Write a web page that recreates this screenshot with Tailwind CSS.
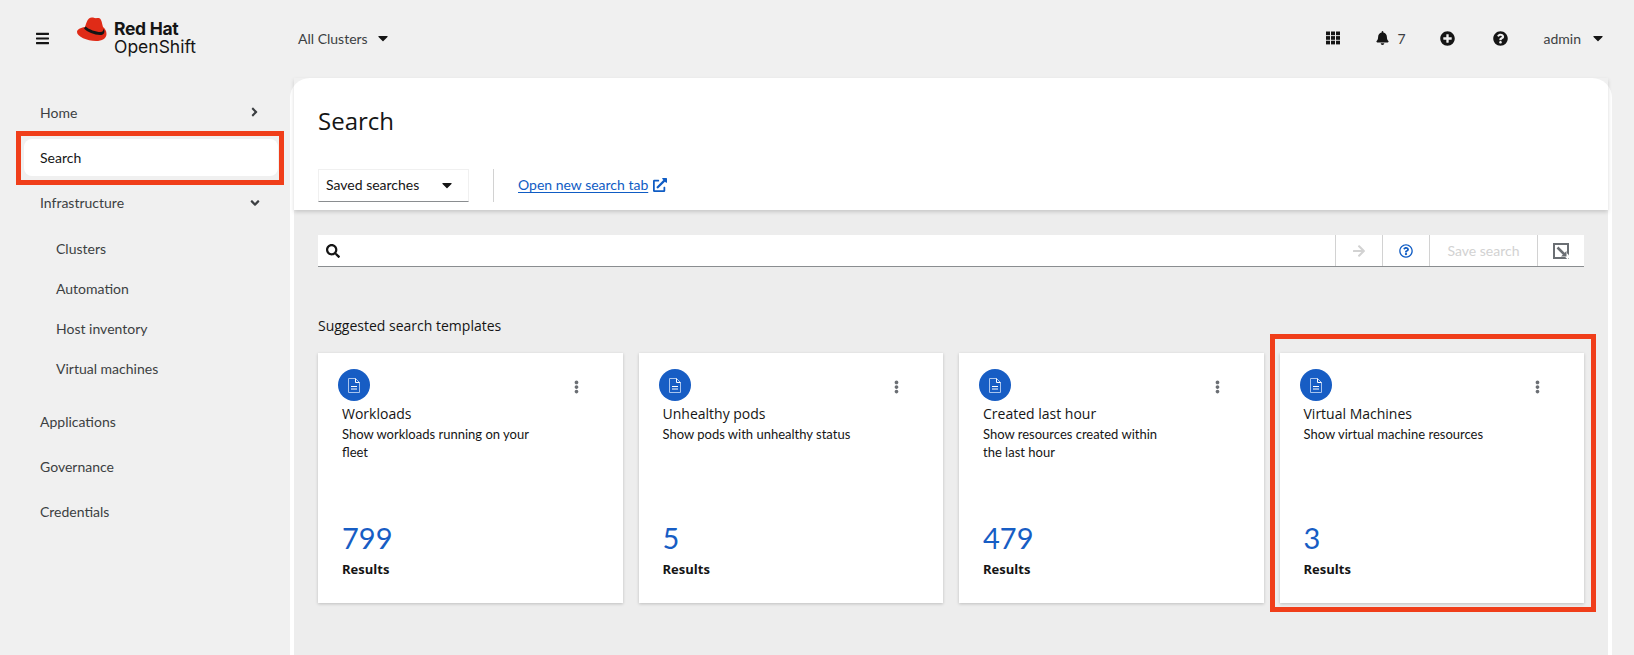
<!DOCTYPE html>
<html lang="en">
<head>
<meta charset="UTF-8" />
<title>Search - Red Hat OpenShift</title>
<script src="https://cdn.jsdelivr.net/npm/@tailwindcss/browser@4"></script>
</head>
<body class="bg-[#f0f0f0] text-[#151515] font-['Lato',sans-serif] h-[655px] overflow-hidden relative">

  <!-- Masthead -->
  <header class="h-[78px] pb-[2px] flex items-center">
    <button class="w-[12px] ml-[36px] mr-[29px]">
      <svg viewBox="0 0 448 512" class="w-[13px] h-[15px] fill-[#151515]"><path d="M16 132h416c8.837 0 16-7.163 16-16V76c0-8.837-7.163-16-16-16H16C7.163 60 0 67.163 0 76v40c0 8.837 7.163 16 16 16zm0 160h416c8.837 0 16-7.163 16-16v-40c0-8.837-7.163-16-16-16H16c-8.837 0-16 7.163-16 16v40c0 8.837 7.163 16 16 16zm0 160h416c8.837 0 16-7.163 16-16v-40c0-8.837-7.163-16-16-16H16c-8.837 0-16 7.163-16 16v40c0 8.837 7.163 16 16 16z"/></svg>
    </button>
    <div class="flex items-start w-[221px] h-[40px]">
      <svg viewBox="0 0 30 24" class="w-[30px] h-[24px] mt-[-1px]">
        <path fill="#e02b17" d="M8 10C9 7 10 3 12 1.500C13.500 .3 15.500 .5 17.500 1C19.500 1.500 21 .5 22.500 1.200C24.500 2.200 25 6 26 10C28 11.500 29.500 14 29.500 17C29.500 21.500 25 24 19 24C10 24 0 19.500 0 15C0 12.500 3.500 10.800 8 10Z"/>
        <path fill="#151515" d="M8.500 9.500C12 12.500 19 15 23.500 15C25.500 15 26.500 14 26.300 12L27.200 13C28 16 26.500 18 23 18C17.500 18 10 15 7 11.500Z"/>
      </svg>
      <div class="ml-[7px] mt-[2px]">
        <div class="text-[17.500px] leading-[17px] font-bold tracking-[-0.3px] font-['Inter',sans-serif]">Red Hat</div>
        <div class="text-[17.500px] leading-[19px] font-['Inter',sans-serif] font-normal">OpenShift</div>
      </div>
    </div>
    <button class="flex items-center text-[14px] text-[#3c3f42]">
      All Clusters
      <svg viewBox="0 0 320 512" class="w-[10px] h-[16px] ml-[10px] fill-[#151515]"><path d="M31.300 192h257.300c17.800 0 26.700 21.500 14.100 34.100L174.100 354.800c-7.800 7.800-20.500 7.800-28.300 0L17.200 226.100C4.600 213.500 13.500 192 31.300 192z"/></svg>
    </button>
    <div class="ml-auto flex items-center">
      <svg viewBox="0 0 14 14" class="w-[14px] h-[14px] fill-[#151515] mr-[36px]">
        <rect x="0" y="0.500" width="4" height="3.700"/><rect x="5" y="0.500" width="4" height="3.700"/><rect x="10" y="0.500" width="4" height="3.700"/>
        <rect x="0" y="5.100" width="4" height="3.700"/><rect x="5" y="5.100" width="4" height="3.700"/><rect x="10" y="5.100" width="4" height="3.700"/>
        <rect x="0" y="9.700" width="4" height="3.700"/><rect x="5" y="9.700" width="4" height="3.700"/><rect x="10" y="9.700" width="4" height="3.700"/>
      </svg>
      <svg viewBox="0 0 448 512" class="w-[13px] h-[14px] fill-[#151515]"><path d="M224 512c35.320 0 63.970-28.650 63.970-64H160.030c0 35.350 28.650 64 63.970 64zm215.390-149.710c-19.320-20.760-55.470-51.990-55.470-154.290 0-77.700-54.480-139.900-127.940-155.160V32c0-17.670-14.320-32-31.980-32s-31.980 14.330-31.980 32v20.840C118.560 68.100 64.080 130.300 64.080 208c0 102.300-36.150 133.530-55.470 154.290-6 6.450-8.660 14.160-8.610 21.710.11 16.400 12.980 32 32.100 32h383.800c19.120 0 32-15.600 32.100-32 .05-7.550-2.610-15.270-8.610-21.710z"/></svg>
      <span class="text-[14px] ml-[9px] mr-[34px] w-[8px] text-[#3c3f42]">7</span>
      <svg viewBox="0 0 512 512" class="w-[15px] h-[15px] fill-[#151515] mr-[38px]"><path d="M256 8C119 8 8 119 8 256s111 248 248 248 248-111 248-248S393 8 256 8zm144 276c0 6.600-5.400 12-12 12h-92v92c0 6.600-5.400 12-12 12h-56c-6.600 0-12-5.400-12-12v-92h-92c-6.600 0-12-5.400-12-12v-56c0-6.600 5.400-12 12-12h92v-92c0-6.600 5.400-12 12-12h56c6.600 0 12 5.400 12 12v92h92c6.600 0 12 5.400 12 12v56z"/></svg>
      <svg viewBox="0 0 512 512" class="w-[15px] h-[15px] fill-[#151515] mr-[36px]"><path d="M504 256c0 136.997-111.043 248-248 248S8 392.997 8 256C8 119.083 119.043 8 256 8s248 111.083 248 248zM262.655 90c-54.497 0-89.255 22.957-116.549 63.758-3.536 5.286-2.353 12.415 2.715 16.258l34.699 26.310c5.205 3.947 12.621 3.008 16.665-2.122 17.864-22.658 30.113-35.797 57.303-35.797 20.429 0 45.698 13.148 45.698 32.958 0 14.976-12.363 22.667-32.534 33.976C247.128 238.528 216 254.941 216 296v4c0 6.627 5.373 12 12 12h56c6.627 0 12-5.373 12-12v-1.333c0-28.462 83.186-29.647 83.186-106.667 0-58.002-60.165-102-116.531-102zM256 338c-25.365 0-46 20.635-46 46 0 25.364 20.635 46 46 46s46-20.636 46-46c0-25.365-20.635-46-46-46z"/></svg>
      <button class="flex items-center text-[14px] text-[#3c3f42] mr-[31px]">
        admin
        <svg viewBox="0 0 320 512" class="w-[10px] h-[16px] ml-[12px] fill-[#151515]"><path d="M31.300 192h257.300c17.800 0 26.700 21.500 14.100 34.100L174.100 354.800c-7.800 7.800-20.500 7.800-28.300 0L17.200 226.100C4.600 213.500 13.500 192 31.300 192z"/></svg>
      </button>
    </div>
  </header>

  <div class="flex">
    <!-- Sidebar -->
    <nav class="w-[290px] shrink-0 pl-[24px] pr-[12px] pt-[17px] text-[14px] text-[#3c3f42]">
      <a class="h-[38px] mt-[-2px] mb-[8px] pl-[16px] pr-[20px] flex items-center justify-between">
        Home
        <svg viewBox="0 0 256 512" class="w-[7px] h-[14px] fill-[#3c3f42]"><path d="M224.300 273l-136 136c-9.400 9.400-24.600 9.400-33.900 0l-22.600-22.600c-9.400-9.400-9.400-24.600 0-33.900l96.400-96.400-96.400-96.400c-9.400-9.400-9.400-24.600 0-33.900L54.300 103c9.400-9.400 24.600-9.400 33.900 0l136 136c9.500 9.400 9.500 24.600.1 34z"/></svg>
      </a>
      <a class="h-[37px] mb-[8px] pl-[16px] bg-white rounded-lg text-[#151515] flex items-center">Search</a>
      <a class="h-[37px] pl-[16px] pr-[18px] flex items-center justify-between">
        Infrastructure
        <svg viewBox="0 0 320 512" class="w-[10px] h-[14px] fill-[#3c3f42]"><path d="M143 352.300L7 216.300c-9.400-9.400-9.400-24.600 0-33.900l22.600-22.600c9.400-9.400 24.600-9.400 33.900 0l96.400 96.400 96.400-96.400c9.400-9.400 24.600-9.400 33.900 0l22.600 22.600c9.400 9.400 9.400 24.600 0 33.900l-136 136c-9.200 9.400-24.400 9.400-33.800 0z"/></svg>
      </a>
      <div class="pl-[32px] pt-[7px]">
        <a class="h-[40px] flex items-center">Clusters</a>
        <a class="h-[40px] flex items-center">Automation</a>
        <a class="h-[40px] flex items-center">Host inventory</a>
        <a class="h-[40px] flex items-center">Virtual machines</a>
      </div>
      <div class="pl-[16px] pt-[11px]">
        <a class="h-[45px] flex items-center">Applications</a>
        <a class="h-[45px] flex items-center">Governance</a>
        <a class="h-[45px] flex items-center">Credentials</a>
      </div>
    </nav>

    <!-- Main panel -->
    <main class="w-[1322px] h-[577px] bg-white rounded-t-[20px] px-[4px] flex flex-col">
      <div class="h-[132px] shrink-0 relative z-10 shadow-[0_2px_4px_rgba(0,0,0,0.16)] px-[24px]">
        <h1 class="text-[24px] font-medium leading-[32px] pt-[27px] h-[91px] font-['Open_Sans',sans-serif]">Search</h1>
        <div class="flex items-center">
          <button class="w-[151px] h-[33px] border border-[#f0f0f0] border-b-[#8a8d90] pl-[7px] pr-[16px] pb-[2px] text-[14px] flex items-center justify-between">
            Saved searches
            <svg viewBox="0 0 320 512" class="w-[10px] h-[16px] fill-[#151515]"><path d="M31.300 192h257.300c17.800 0 26.700 21.500 14.100 34.100L174.100 354.800c-7.800 7.800-20.500 7.800-28.300 0L17.200 226.100C4.600 213.500 13.500 192 31.300 192z"/></svg>
          </button>
          <div class="w-px h-[33px] bg-[#d2d2d2] ml-[24px] mr-[24px]"></div>
          <a class="text-[14px] text-[#0f5cc4] underline underline-offset-2 mb-[2px]">Open new search tab</a>
          <svg viewBox="0 0 512 512" class="w-[14px] h-[14px] ml-[5px] mb-[2px] fill-[#0f5cc4]"><path d="M432,320H400a16,16,0,0,0-16,16V448H64V128H208a16,16,0,0,0,16-16V80a16,16,0,0,0-16-16H48A48,48,0,0,0,0,112V464a48,48,0,0,0,48,48H400a48,48,0,0,0,48-48V336A16,16,0,0,0,432,320ZM488,0h-128c-21.370,0-32.050,25.910-17,41l35.730,35.730L135,320.370a24,24,0,0,0,0,34L157.670,377a24,24,0,0,0,34,0L435.280,133.320,471,169c15,15,41,4.500,41-17V24A24,24,0,0,0,488,0Z"/></svg>
        </div>
      </div>

      <div class="flex-1 bg-[#ededed] px-[24px] pt-[25px]">
        <!-- Search bar -->
        <div class="h-[32px] bg-white border-b border-[#8a8d90] flex items-stretch">
          <div class="flex-1 flex items-center pl-[8px]">
            <svg viewBox="0 0 512 512" class="w-[14px] h-[14px] fill-[#151515]"><path d="M505 442.700L405.300 343c-4.500-4.500-10.600-7-17-7H372c27.600-35.300 44-79.700 44-128C416 93.100 322.900 0 208 0S0 93.100 0 208s93.100 208 208 208c48.300 0 92.700-16.400 128-44v16.300c0 6.400 2.500 12.500 7 17l99.700 99.700c9.400 9.400 24.600 9.400 33.900 0l28.300-28.300c9.400-9.400 9.400-24.600.1-34zM208 336c-70.700 0-128-57.200-128-128 0-70.700 57.200-128 128-128 70.700 0 128 57.200 128 128 0 70.700-57.200 128-128 128z"/></svg>
          </div>
          <div class="w-[47px] border-l border-[#d2d2d2] flex items-center justify-center">
            <svg viewBox="0 0 448 512" class="w-[12px] h-[14px] fill-[#d2d2d2]"><path d="M190.500 66.900l22.200-22.200c9.400-9.400 24.600-9.400 33.900 0L441 239c9.400 9.400 9.400 24.600 0 33.900L246.600 467.300c-9.400 9.400-24.600 9.400-33.900 0l-22.200-22.200c-9.500-9.500-9.300-25 .4-34.300L311.400 296H24c-13.300 0-24-10.700-24-24v-32c0-13.300 10.700-24 24-24h287.400L190.900 101.200c-9.800-9.300-10-24.800-.4-34.300z"/></svg>
          </div>
          <div class="w-[47px] border-l border-[#d2d2d2] flex items-center justify-center">
            <svg viewBox="0 0 512 512" class="w-[14px] h-[14px] fill-[#0f5cc4]"><path d="M256 8C119.043 8 8 119.083 8 256c0 136.997 111.043 248 248 248s248-111.003 248-248C504 119.083 392.957 8 256 8zm0 448c-110.532 0-200-89.431-200-200 0-110.495 89.472-200 200-200 110.491 0 200 89.471 200 200 0 110.530-89.431 200-200 200zm107.244-255.200c0 67.052-72.421 68.084-72.421 92.863V300c0 6.627-5.373 12-12 12h-45.647c-6.627 0-12-5.373-12-12v-8.659c0-35.745 27.100-50.034 47.579-61.516 17.561-9.845 28.324-16.541 28.324-29.579 0-17.246-21.999-28.693-39.784-28.693-23.189 0-33.894 10.977-48.942 29.969-4.057 5.120-11.460 6.071-16.666 2.124l-27.824-21.098c-5.107-3.872-6.251-11.066-2.644-16.363C184.846 131.491 214.940 112 261.794 112c49.071 0 101.450 38.304 101.450 88.800zM298 368c0 23.159-18.841 42-42 42s-42-18.841-42-42 18.841-42 42-42 42 18.841 42 42z"/></svg>
          </div>
          <div class="w-[108px] border-l border-[#d2d2d2] flex items-center justify-center text-[14px] text-[#d2d2d2]">Save search</div>
          <div class="w-[47px] border-l border-[#d2d2d2] flex items-center justify-center">
            <svg viewBox="0 0 16 16" class="w-[16px] h-[16px]">
              <path fill="#6a6e73" d="M0 0h16v16H0z"/>
              <path fill="#ffffff" d="M2 2h12v12H2z"/>
              <path fill="none" stroke="#ffffff" stroke-width="4" d="M5 4l11 11"/>
              <path fill="none" stroke="#6a6e73" stroke-width="2.500" d="M4.500 4.500l7.500 7.500"/>
              <path fill="#6a6e73" d="M13.500 8v5.500H8z"/>
            </svg>
          </div>
        </div>

        <h2 class="text-[14px] font-medium mt-[49px] mb-[17px] leading-[20px] font-['Open_Sans',sans-serif]">Suggested search templates</h2>

        <!-- Template cards -->
        <div class="grid grid-cols-4 gap-[16px]">
          <div class="h-[250px] bg-white shadow-[0_1px_3px_rgba(0,0,0,0.2)] pl-[24px] pr-[28px] pt-[16px] flex flex-col">
            <div class="flex items-start justify-between ml-[-4px]">
              <span class="w-[32px] h-[32px] rounded-full bg-[#175dc4] flex items-center justify-center">
                <svg viewBox="0 0 12 15" class="w-[12px] h-[15px] fill-none stroke-[#a8c4ee]"><path d="M.5.500h7l4 4v10h-11z"/><path stroke="#ffffff" d="M7.500.500v4h4M3 8.500h6M3 11h6"/></svg>
              </span>
              <svg viewBox="0 0 192 512" class="w-[5px] h-[14px] fill-[#6a6e73] mt-[11px] mr-[16px]"><path d="M96 184c39.800 0 72 32.200 72 72s-32.200 72-72 72-72-32.200-72-72 32.200-72 72-72zM24 80c0 39.800 32.200 72 72 72s72-32.200 72-72S135.800 8 96 8 24 40.200 24 80zm0 352c0 39.800 32.200 72 72 72s72-32.200 72-72-32.200-72-72-72-72 32.200-72 72z"/></svg>
            </div>
            <h3 class="text-[14px] font-medium leading-[18px] mt-[4px] font-['Open_Sans',sans-serif]">Workloads</h3>
            <p class="text-[13px] leading-[18px] mt-[2px] max-w-[200px]">Show workloads running on your fleet</p>
            <div class="mt-auto pb-[25px]">
              <div class="text-[29px] leading-[34px] text-[#175dc4]">799</div>
              <div class="text-[13px] font-bold leading-[18px] mt-[5px] font-['Open_Sans',sans-serif]">Results</div>
            </div>
          </div>
          <div class="h-[250px] bg-white shadow-[0_1px_3px_rgba(0,0,0,0.2)] pl-[24px] pr-[28px] pt-[16px] flex flex-col">
            <div class="flex items-start justify-between ml-[-4px]">
              <span class="w-[32px] h-[32px] rounded-full bg-[#175dc4] flex items-center justify-center">
                <svg viewBox="0 0 12 15" class="w-[12px] h-[15px] fill-none stroke-[#a8c4ee]"><path d="M.5.500h7l4 4v10h-11z"/><path stroke="#ffffff" d="M7.500.500v4h4M3 8.500h6M3 11h6"/></svg>
              </span>
              <svg viewBox="0 0 192 512" class="w-[5px] h-[14px] fill-[#6a6e73] mt-[11px] mr-[16px]"><path d="M96 184c39.800 0 72 32.200 72 72s-32.200 72-72 72-72-32.200-72-72 32.200-72 72-72zM24 80c0 39.800 32.200 72 72 72s72-32.200 72-72S135.800 8 96 8 24 40.200 24 80zm0 352c0 39.800 32.200 72 72 72s72-32.200 72-72-32.200-72-72-72-72 32.200-72 72z"/></svg>
            </div>
            <h3 class="text-[14px] font-medium leading-[18px] mt-[4px] font-['Open_Sans',sans-serif]">Unhealthy pods</h3>
            <p class="text-[13px] leading-[18px] mt-[2px] max-w-[200px]">Show pods with unhealthy status</p>
            <div class="mt-auto pb-[25px]">
              <div class="text-[29px] leading-[34px] text-[#175dc4]">5</div>
              <div class="text-[13px] font-bold leading-[18px] mt-[5px] font-['Open_Sans',sans-serif]">Results</div>
            </div>
          </div>
          <div class="h-[250px] bg-white shadow-[0_1px_3px_rgba(0,0,0,0.2)] pl-[24px] pr-[28px] pt-[16px] flex flex-col">
            <div class="flex items-start justify-between ml-[-4px]">
              <span class="w-[32px] h-[32px] rounded-full bg-[#175dc4] flex items-center justify-center">
                <svg viewBox="0 0 12 15" class="w-[12px] h-[15px] fill-none stroke-[#a8c4ee]"><path d="M.5.500h7l4 4v10h-11z"/><path stroke="#ffffff" d="M7.500.500v4h4M3 8.500h6M3 11h6"/></svg>
              </span>
              <svg viewBox="0 0 192 512" class="w-[5px] h-[14px] fill-[#6a6e73] mt-[11px] mr-[16px]"><path d="M96 184c39.800 0 72 32.200 72 72s-32.200 72-72 72-72-32.200-72-72 32.200-72 72-72zM24 80c0 39.800 32.200 72 72 72s72-32.200 72-72S135.800 8 96 8 24 40.200 24 80zm0 352c0 39.800 32.200 72 72 72s72-32.200 72-72-32.200-72-72-72-72 32.200-72 72z"/></svg>
            </div>
            <h3 class="text-[14px] font-medium leading-[18px] mt-[4px] font-['Open_Sans',sans-serif]">Created last hour</h3>
            <p class="text-[13px] leading-[18px] mt-[2px] max-w-[185px]">Show resources created within the last hour</p>
            <div class="mt-auto pb-[25px]">
              <div class="text-[29px] leading-[34px] text-[#175dc4]">479</div>
              <div class="text-[13px] font-bold leading-[18px] mt-[5px] font-['Open_Sans',sans-serif]">Results</div>
            </div>
          </div>
          <div class="h-[250px] bg-white shadow-[0_1px_3px_rgba(0,0,0,0.2)] pl-[24px] pr-[28px] pt-[16px] flex flex-col">
            <div class="flex items-start justify-between ml-[-4px]">
              <span class="w-[32px] h-[32px] rounded-full bg-[#175dc4] flex items-center justify-center">
                <svg viewBox="0 0 12 15" class="w-[12px] h-[15px] fill-none stroke-[#a8c4ee]"><path d="M.5.500h7l4 4v10h-11z"/><path stroke="#ffffff" d="M7.500.500v4h4M3 8.500h6M3 11h6"/></svg>
              </span>
              <svg viewBox="0 0 192 512" class="w-[5px] h-[14px] fill-[#6a6e73] mt-[11px] mr-[16px]"><path d="M96 184c39.800 0 72 32.200 72 72s-32.200 72-72 72-72-32.200-72-72 32.200-72 72-72zM24 80c0 39.800 32.200 72 72 72s72-32.200 72-72S135.800 8 96 8 24 40.200 24 80zm0 352c0 39.800 32.200 72 72 72s72-32.200 72-72-32.200-72-72-72-72 32.200-72 72z"/></svg>
            </div>
            <h3 class="text-[14px] font-medium leading-[18px] mt-[4px] font-['Open_Sans',sans-serif]">Virtual Machines</h3>
            <p class="text-[13px] leading-[18px] mt-[2px] max-w-[200px]">Show virtual machine resources</p>
            <div class="mt-auto pb-[25px]">
              <div class="text-[29px] leading-[34px] text-[#175dc4]">3</div>
              <div class="text-[13px] font-bold leading-[18px] mt-[5px] font-['Open_Sans',sans-serif]">Results</div>
            </div>
          </div>
        </div>
      </div>
    </main>
  </div>

  <!-- Annotation boxes drawn over the screenshot -->
  <div class="absolute left-[16px] top-[131px] w-[268px] h-[54px] border-[5px] border-[#f03e1a] pointer-events-none"></div>
  <div class="absolute left-[1270px] top-[334px] w-[326px] h-[278px] border-[5px] border-[#f03e1a] pointer-events-none z-20"></div>
</body>
</html>
